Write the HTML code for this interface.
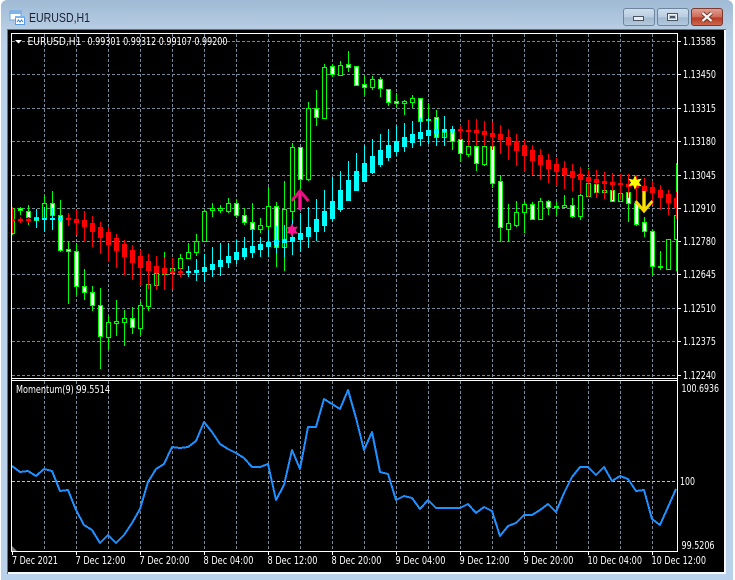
<!DOCTYPE html>
<html>
<head>
<meta charset="utf-8">
<title>EURUSD,H1</title>
<style>
html,body{margin:0;padding:0;background:#fff;overflow:hidden}
svg{display:block}
text{font-family:"DejaVu Sans","Liberation Sans",sans-serif;fill:#fff;font-size:10.5px}
.c{shape-rendering:crispEdges}
</style>
</head>
<body>
<svg width="735" height="580" viewBox="0 0 735 580" xmlns="http://www.w3.org/2000/svg">
<defs>
<linearGradient id="tb" gradientUnits="userSpaceOnUse" x1="0" y1="0" x2="0" y2="45"><stop offset="0" stop-color="#a0bad5"/><stop offset=".6" stop-color="#b5cce2"/><stop offset="1" stop-color="#b9d1ea"/></linearGradient>
<linearGradient id="bt" x1="0" y1="0" x2="0" y2="1"><stop offset="0" stop-color="#cfdeec"/><stop offset=".5" stop-color="#b9cde0"/><stop offset=".55" stop-color="#a3b9cf"/><stop offset="1" stop-color="#b4cadf"/></linearGradient>
<linearGradient id="cl" x1="0" y1="0" x2="0" y2="1"><stop offset="0" stop-color="#e0a095"/><stop offset=".5" stop-color="#cf6a58"/><stop offset=".55" stop-color="#b83a24"/><stop offset="1" stop-color="#cc6a50"/></linearGradient>
<clipPath id="mc"><rect x="12" y="34" width="665" height="344"/></clipPath>
</defs>

<!-- window chrome -->
<rect width="735" height="580" fill="#fff"/>
<rect x="1" y="0" width="732" height="590" rx="6" fill="url(#tb)"/>
<rect x="7" y="29" width="719" height="545" fill="#6a7078" class="c"/>
<rect x="724" y="30" width="2" height="544" fill="#f4f6f8" class="c"/>
<rect x="8" y="572" width="718" height="2" fill="#f4f6f8" class="c"/>
<rect x="8" y="30" width="716" height="542" fill="#000" class="c"/>

<!-- title icon -->
<g class="c">
<rect x="10" y="11" width="11" height="9" fill="#fff" stroke="#6aa5e4"/>
<rect x="10" y="11" width="11" height="3" fill="#7db4ec"/>
<rect x="15.5" y="16.5" width="9" height="8" fill="#fff" stroke="#5a9be0"/>
<rect x="15" y="16" width="10" height="2" fill="#7db4ec"/>
</g>
<path d="M17 22l1.5-2 1.5 2 1.5-2 1.5 2" fill="none" stroke="#3a7fd0" stroke-width="1"/>
<text x="29" y="22" style="font-family:'Liberation Sans',sans-serif;font-size:12.5px;fill:#1c2030" textLength="61" lengthAdjust="spacingAndGlyphs">EURUSD,H1</text>

<!-- window buttons -->
<rect x="623.5" y="8.5" width="31" height="17" rx="2.5" fill="url(#bt)" stroke="#6d86a0"/>
<rect x="657.5" y="8.5" width="31" height="17" rx="2.5" fill="url(#bt)" stroke="#6d86a0"/>
<rect x="691.5" y="8.5" width="31" height="17" rx="2.5" fill="url(#cl)" stroke="#7a3a30"/>
<rect x="633.5" y="16.5" width="10" height="4" fill="#e8eef4" stroke="#4a5460" class="c"/>
<rect x="667.5" y="13.5" width="10" height="7" fill="none" stroke="#4a5460" stroke-width="1" class="c"/>
<rect x="668.5" y="14.5" width="8" height="5" fill="none" stroke="#eef2f6" stroke-width="1" class="c"/>
<rect x="670" y="16" width="5" height="2" fill="#4a5460" class="c"/>
<path d="M702.5 13l9 8M711.5 13l-9 8" stroke="#5a2a20" stroke-width="4" fill="none"/>
<path d="M702.5 13l9 8M711.5 13l-9 8" stroke="#f6f0ee" stroke-width="2.4" fill="none"/>

<!-- grid main -->
<g class="c" fill="none" stroke="#778899" stroke-width="1" stroke-dasharray="3 2">
<path d="M12 41.5H677M12 74.5H677M12 108.5H677M12 141.5H677M12 175.5H677M12 208.5H677M12 241.5H677M12 274.5H677M12 308.5H677M12 341.5H677M12 375.5H677"/>
<path d="M44.5 34V378M76.5 34V378M108.5 34V378M140.5 34V378M172.5 34V378M204.5 34V378M236.5 34V378M268.5 34V378M300.5 34V378M332.5 34V378M364.5 34V378M396.5 34V378M428.5 34V378M460.5 34V378M492.5 34V378M524.5 34V378M556.5 34V378M588.5 34V378M620.5 34V378M652.5 34V378"/>
<path d="M44.5 381V551M76.5 381V551M108.5 381V551M140.5 381V551M172.5 381V551M204.5 381V551M236.5 381V551M268.5 381V551M300.5 381V551M332.5 381V551M364.5 381V551M396.5 381V551M428.5 381V551M460.5 381V551M492.5 381V551M524.5 381V551M556.5 381V551M588.5 381V551M620.5 381V551M652.5 381V551"/>
</g>
<path class="c" d="M12 481.5H677" fill="none" stroke="#c0c0c0" stroke-dasharray="3 2"/>

<g clip-path="url(#mc)" class="c">
<!-- green wicks -->
<path fill="none" stroke="#0f0" stroke-width="1" d="M12.5 207V235M20.5 207V215M28.5 205V225M36.5 214V222M44.5 195V222M52.5 191V220M60.5 200V252M68.5 242V304M76.5 243V295M84.5 269V300M92.5 286V311M100.5 288V369M108.5 315V349M116.5 300V336M124.5 310V346M132.5 307V334M140.5 301V335M148.5 284V311M156.5 273V285M164.5 252V275M172.5 268V273M180.5 254V268M188.5 243V258M196.5 234V256M204.5 210V241M212.5 203V217M220.5 205V213M228.5 198V213M236.5 200V218M244.5 208V225M252.5 203V232M260.5 218V233M268.5 187V230M276.5 202V267M284.5 181V271M292.5 143V225M300.5 147V190M308.5 102V181M316.5 90V126M324.5 64V118M332.5 64V77M340.5 61V76M348.5 51V72M356.5 66V86M364.5 75V95M372.5 76V90M380.5 77V97M388.5 89V106M396.5 93V108M404.5 100V115M412.5 95V108M420.5 98V125M428.5 103V143M436.5 110V146M444.5 118V146M452.5 126V150M460.5 135V162M468.5 143V157M476.5 146V171M484.5 146V166M492.5 146V188M500.5 175V242M508.5 204V242M516.5 201V227M524.5 201V233M532.5 202V219M540.5 198V220M548.5 200V215M556.5 201V216M564.5 195V207M572.5 198V218M580.5 194V220M588.5 168V196M596.5 184V195M604.5 180V199M612.5 190V202M620.5 193V201M628.5 192V222M636.5 203V226M644.5 217V237M652.5 230V275M660.5 251V270M668.5 239V269M676.5 163V271"/>
<!-- hollow bodies -->
<path fill="#000" stroke="#0f0" stroke-width="1" d="M10.5 208.5h4v25h-4zM42.5 203.5h4v16h-4zM106.5 322.5h4v15h-4zM114.5 321.5h4v2h-4zM122.5 318.5h4v4h-4zM138.5 305.5h4v23h-4zM146.5 284.5h4v22h-4zM154.5 273.5h4v12h-4zM162.5 268.5h4v6h-4zM170.5 268.5h4v5h-4zM178.5 258.5h4v10h-4zM186.5 252.5h4v6h-4zM194.5 241.5h4v11h-4zM202.5 211.5h4v30h-4zM210.5 208.5h4v2h-4zM218.5 208.5h4v2h-4zM226.5 203.5h4v8h-4zM258.5 225.5h4v4h-4zM266.5 206.5h4v20h-4zM282.5 209.5h4v38h-4zM290.5 147.5h4v64h-4zM306.5 108.5h4v71h-4zM322.5 67.5h4v51h-4zM338.5 65.5h4v10h-4zM370.5 79.5h4v8h-4zM402.5 101.5h4v2h-4zM410.5 98.5h4v4h-4zM426.5 119.5h4v1h-4zM442.5 132.5h4v5h-4zM466.5 146.5h4v8h-4zM482.5 146.5h4v18h-4zM506.5 223.5h4v6h-4zM514.5 212.5h4v13h-4zM522.5 204.5h4v8h-4zM538.5 201.5h4v18h-4zM554.5 206.5h4v1h-4zM562.5 205.5h4v2h-4zM578.5 195.5h4v21h-4zM586.5 183.5h4v13h-4zM602.5 190.5h4v2h-4zM618.5 193.5h4v8h-4zM658.5 266.5h4v1h-4zM666.5 239.5h4v30h-4zM674.5 215.5h4v24h-4z"/>
<!-- white bodies -->
<path fill="#fff" stroke="#0f0" stroke-width="1" d="M18.5 208.5h4v2h-4zM26.5 211.5h4v6h-4zM34.5 217.5h4v3h-4zM50.5 203.5h4v12h-4zM58.5 215.5h4v35h-4zM66.5 249.5h4v2h-4zM74.5 251.5h4v35h-4zM82.5 286.5h4v6h-4zM90.5 292.5h4v13h-4zM98.5 305.5h4v31h-4zM130.5 318.5h4v9h-4zM234.5 203.5h4v12h-4zM242.5 215.5h4v7h-4zM250.5 222.5h4v7h-4zM274.5 206.5h4v41h-4zM298.5 147.5h4v32h-4zM314.5 108.5h4v9h-4zM330.5 66.5h4v8h-4zM346.5 64.5h4v3h-4zM354.5 66.5h4v19h-4zM362.5 84.5h4v3h-4zM378.5 79.5h4v9h-4zM386.5 89.5h4v13h-4zM394.5 101.5h4v2h-4zM418.5 98.5h4v23h-4zM434.5 117.5h4v20h-4zM450.5 130.5h4v11h-4zM458.5 139.5h4v14h-4zM474.5 146.5h4v17h-4zM490.5 146.5h4v37h-4zM498.5 181.5h4v46h-4zM530.5 204.5h4v15h-4zM546.5 201.5h4v6h-4zM570.5 205.5h4v11h-4zM594.5 184.5h4v8h-4zM610.5 190.5h4v11h-4zM626.5 192.5h4v11h-4zM634.5 203.5h4v21h-4zM642.5 222.5h4v9h-4zM650.5 231.5h4v35h-4z"/>
<!-- red overlay -->
<path fill="none" stroke="#f00" stroke-width="1" d="M12.5 207V233M20.5 217V223M28.5 217V223M68.5 213V226M76.5 210V235M84.5 211V242M92.5 216V247M100.5 222V254M108.5 227V262M116.5 234V268M124.5 240V275M132.5 245V280M140.5 250V286M148.5 254V289M156.5 256V290M164.5 258V290M172.5 258V289M180.5 268V277M460.5 125V140M468.5 120V146M476.5 119V146M484.5 121V146M492.5 122V150M500.5 125V154M508.5 129V160M516.5 134V166M524.5 140V172M532.5 145V175M540.5 149V180M548.5 154V183M556.5 158V186M564.5 161V189M572.5 164V191M580.5 167V194M588.5 169V197M596.5 170V198M604.5 172V199M612.5 173V200M620.5 174V200M628.5 174V198M636.5 175V200M644.5 178V205M652.5 181V205M660.5 185V210M668.5 190V215M676.5 192V219"/>
<path fill="none" stroke="#f00" stroke-width="5" d="M12.5 219V221M20.5 219V221M28.5 219V221M68.5 218V220M76.5 219V223M84.5 220V227M92.5 223V232M100.5 227V238M108.5 232V245M116.5 238V251M124.5 244V257M132.5 250V263M140.5 256V268M148.5 261V271M156.5 266V273M164.5 268V274M172.5 271V273M180.5 271V273M460.5 129V131M468.5 130V132M476.5 130V133M484.5 131V135M492.5 133V137M500.5 134V140M508.5 137V145M516.5 141V151M524.5 145V156M532.5 150V161M540.5 155V165M548.5 160V169M556.5 164V172M564.5 168V175M572.5 171V178M580.5 174V180M588.5 177V182M596.5 179V183M604.5 181V184M612.5 182V185M620.5 183V185M628.5 184V187M636.5 185V188M644.5 186V191M652.5 187V193M660.5 190V198M668.5 194V203M676.5 198V208"/>
<!-- cyan overlay -->
<path fill="none" stroke="#0ff" stroke-width="1" d="M36.5 209V228M44.5 207V232M52.5 208V230M60.5 216V222M188.5 266V277M196.5 259V281M204.5 254V282M212.5 247V277M220.5 243V276M228.5 243V268M236.5 240V264M244.5 237V260M252.5 230V258M260.5 237V257M268.5 230V257M276.5 226V254M284.5 225V257M292.5 220V255M300.5 213V252M308.5 207V248M316.5 199V241M324.5 190V232M332.5 177V222M340.5 171V212M348.5 161V201M356.5 153V191M364.5 145V182M372.5 139V174M380.5 134V167M388.5 129V161M396.5 125V156M404.5 123V152M412.5 121V148M420.5 118V146M428.5 118V144M436.5 119V146M444.5 116V146M452.5 126V134"/>
<path fill="none" stroke="#0ff" stroke-width="5" d="M36.5 218V220M44.5 218V220M52.5 218V220M60.5 218V220M188.5 271V273M196.5 270V273M204.5 267V272M212.5 264V270M220.5 260V267M228.5 256V263M236.5 252V260M244.5 248V257M252.5 246V253M260.5 244V250M268.5 242V247M276.5 240V245M284.5 239V243M292.5 237V242M300.5 233V240M308.5 227V237M316.5 219V232M324.5 211V226M332.5 201V219M340.5 190V210M348.5 180V201M356.5 171V191M364.5 163V182M372.5 156V173M380.5 150V165M388.5 145V158M396.5 141V152M404.5 137V147M412.5 134V143M420.5 132V139M428.5 130V136M436.5 129V134M444.5 129V132M452.5 129V131"/>
</g>

<!-- arrows & stars -->
<path d="M300 210V192" stroke="#ff1493" stroke-width="3.4" fill="none"/>
<path d="M291.5 201L300 191L308.5 201" stroke="#e8107f" stroke-width="3" fill="none"/>
<polygon fill="#ff1493" points="292,223 293.6,227 298,226.5 295.5,230 298,233.8 293.7,233.2 292,237 290.2,233.2 286,233.8 288.4,230 286,226.5 290.2,227"/>
<path d="M644 191V210" stroke="#ffe600" stroke-width="3.4" fill="none"/>
<path d="M635.5 201L644 211L652.5 201" stroke="#f5d800" stroke-width="3" fill="none"/>
<polygon fill="#ffff00" points="635,175 636.8,179.6 641.8,178.6 639,182.5 641.8,186.4 636.8,185.4 635,190 633.2,185.4 628.2,186.4 631,182.5 628.2,178.6 633.2,179.6"/>

<!-- momentum -->
<polyline class="c" fill="none" stroke="#1e90ff" stroke-width="2" stroke-linejoin="round" points="12,466 20,472 28,471 36,476 44,469 52,471 60,491 68,490 76,510 84,525 92,530 100,543 108,535 116,543 124,535 132,523 140,509 148,482 156,469 164,464 172,447 180,448 188,447 196,441 204,422 212,432 220,444 228,449 236,453 244,458 252,467 260,467 268,464 276,500 284,485 292,450 300,469 308,427 316,427 324,399 332,404 340,409 348,390 356,418 364,450 372,432 380,472 388,474 396,500 404,496 412,498 420,509 428,500 436,508 444,508 452,508 460,508 468,504 476,513 484,507 492,511 500,536 508,526 516,523 524,515 532,515 540,510 548,504 556,512 564,493 572,477 580,467 588,467 596,475 604,467 612,481 620,476 628,479 636,491 644,490 652,519 660,525 668,507 676,489"/>

<!-- frames -->
<g class="c" fill="#fff">
<rect x="11" y="33" width="667" height="1"/>
<rect x="11" y="33" width="1" height="519"/>
<rect x="677" y="33" width="1" height="519"/>
<rect x="11" y="378" width="667" height="1"/>
<rect x="11" y="380" width="667" height="1"/>
<rect x="11" y="551" width="667" height="1"/>
<rect x="12" y="552" width="1" height="3"/><rect x="76" y="552" width="1" height="3"/><rect x="140" y="552" width="1" height="3"/><rect x="204" y="552" width="1" height="3"/><rect x="268" y="552" width="1" height="3"/><rect x="332" y="552" width="1" height="3"/><rect x="396" y="552" width="1" height="3"/><rect x="460" y="552" width="1" height="3"/><rect x="524" y="552" width="1" height="3"/><rect x="588" y="552" width="1" height="3"/><rect x="652" y="552" width="1" height="3"/>
<rect x="678" y="41" width="3" height="1"/><rect x="678" y="74" width="3" height="1"/><rect x="678" y="108" width="3" height="1"/><rect x="678" y="141" width="3" height="1"/><rect x="678" y="175" width="3" height="1"/><rect x="678" y="208" width="3" height="1"/><rect x="678" y="241" width="3" height="1"/><rect x="678" y="274" width="3" height="1"/><rect x="678" y="308" width="3" height="1"/><rect x="678" y="341" width="3" height="1"/><rect x="678" y="375" width="3" height="1"/>
</g>
<polygon points="12,546 12,551 17,551" fill="#808080"/>
<polygon points="15,40 22,40 18.5,43.5" fill="#fff"/>

<!-- labels -->
<text x="27.5" y="45" textLength="54" lengthAdjust="spacingAndGlyphs">EURUSD,H1</text>
<text x="87.5" y="45" textLength="140" lengthAdjust="spacingAndGlyphs">0.99301 0.99312 0.99107 0.99200</text>
<text x="16" y="393" textLength="94" lengthAdjust="spacingAndGlyphs">Momentum(9) 99.5514</text>

<text x="683" y="45" textLength="33" lengthAdjust="spacingAndGlyphs">1.13585</text>
<text x="683" y="78" textLength="33" lengthAdjust="spacingAndGlyphs">1.13450</text>
<text x="683" y="112" textLength="33" lengthAdjust="spacingAndGlyphs">1.13315</text>
<text x="683" y="145" textLength="33" lengthAdjust="spacingAndGlyphs">1.13180</text>
<text x="683" y="179" textLength="33" lengthAdjust="spacingAndGlyphs">1.13045</text>
<text x="683" y="212" textLength="33" lengthAdjust="spacingAndGlyphs">1.12910</text>
<text x="683" y="245" textLength="33" lengthAdjust="spacingAndGlyphs">1.12780</text>
<text x="683" y="278" textLength="33" lengthAdjust="spacingAndGlyphs">1.12645</text>
<text x="683" y="312" textLength="33" lengthAdjust="spacingAndGlyphs">1.12510</text>
<text x="683" y="345" textLength="33" lengthAdjust="spacingAndGlyphs">1.12375</text>
<text x="683" y="379" textLength="33" lengthAdjust="spacingAndGlyphs">1.12240</text>
<text x="681.5" y="392" textLength="37.5" lengthAdjust="spacingAndGlyphs">100.6936</text>
<text x="680" y="485" textLength="15" lengthAdjust="spacingAndGlyphs">100</text>
<text x="681.5" y="549" textLength="33" lengthAdjust="spacingAndGlyphs">99.5206</text>

<text x="12" y="564" textLength="46" lengthAdjust="spacingAndGlyphs">7 Dec 2021</text>
<text x="75.5" y="564" textLength="50" lengthAdjust="spacingAndGlyphs">7 Dec 12:00</text>
<text x="139.5" y="564" textLength="50" lengthAdjust="spacingAndGlyphs">7 Dec 20:00</text>
<text x="203.5" y="564" textLength="50" lengthAdjust="spacingAndGlyphs">8 Dec 04:00</text>
<text x="267.5" y="564" textLength="50" lengthAdjust="spacingAndGlyphs">8 Dec 12:00</text>
<text x="331.5" y="564" textLength="50" lengthAdjust="spacingAndGlyphs">8 Dec 20:00</text>
<text x="395.5" y="564" textLength="50" lengthAdjust="spacingAndGlyphs">9 Dec 04:00</text>
<text x="459.5" y="564" textLength="50" lengthAdjust="spacingAndGlyphs">9 Dec 12:00</text>
<text x="523.5" y="564" textLength="50" lengthAdjust="spacingAndGlyphs">9 Dec 20:00</text>
<text x="587.5" y="564" textLength="54.5" lengthAdjust="spacingAndGlyphs">10 Dec 04:00</text>
<text x="651.5" y="564" textLength="54.5" lengthAdjust="spacingAndGlyphs">10 Dec 12:00</text>
</svg>
</body>
</html>
